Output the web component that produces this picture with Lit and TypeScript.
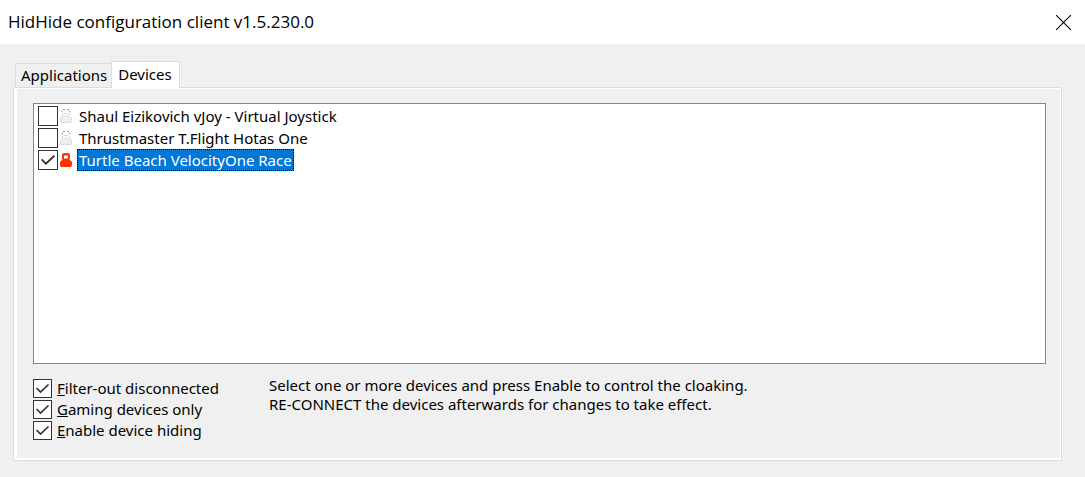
import { LitElement, html, css, svg } from "lit";
import { customElement, state } from "lit/decorators.js";

interface Device {
  name: string;
  hidden: boolean;
}

@customElement("lock-icon")
class LockIcon extends LitElement {
  static properties = { locked: { type: Boolean } };
  declare locked: boolean;

  static styles = css`
    :host { display: block; width: 12px; height: 14px; }
    svg { display: block; }
  `;

  render() {
    return html`<svg width="12" height="14" viewBox="0 0 12 14" aria-hidden="true">
      ${this.locked
        ? svg`<path fill="#ff3300" fill-rule="evenodd"
            d="M3.500 0h5L10 1.500V5L9.500 6.500 12 9v3.500L11 14H1l-1-1.500V9l2.500-2.500L2 5V1.500zM4 3v2.500h4V3L7.500 2.500h-3z" />`
        : svg`<path d="M3 6h6l3 3v3.500L11 14H1l-1-1.500V9z" fill="#eeeeee" />
            <path d="M3 .5h2M7 .5h2M1.500 2.500h1M9.500 2.500h1M2 5.500h1M9 5.500h1" stroke="#999999" fill="none" />
            <path d="M2.500 1v5M9.500 1v5" stroke="#d0d0d0" stroke-dasharray="1 1" fill="none" />
            <path d="M4 4.500h4" stroke="#d8d8d8" fill="none" />
            <path d="M3 6.500L.5 9v3.500l1 1h9l1-1V9L9 6.500" fill="none" stroke="#c8c8c8" stroke-dasharray="1 1" />`}
    </svg>`;
  }
}

@customElement("app-root")
class AppRoot extends LitElement {
  @state() private devices: Device[] = [
    { name: "Shaul Eizikovich vJoy - Virtual Joystick", hidden: false },
    { name: "Thrustmaster T.Flight Hotas One", hidden: false },
    { name: "Turtle Beach VelocityOne Race", hidden: true },
  ];
  @state() private selected = 2;

  private options = [
    { key: "F", rest: "ilter-out disconnected" },
    { key: "G", rest: "aming devices only" },
    { key: "E", rest: "nable device hiding" },
  ];

  static styles = css`
    * { box-sizing: border-box; }
    :host {
      display: flex;
      flex-direction: column;
      min-height: 100vh;
      background: #f0f0f0;
      color: #000;
      font: 15px/19px "Noto Sans", sans-serif;
    }
    .titlebar {
      display: flex;
      align-items: center;
      justify-content: space-between;
      height: 44px;
      padding: 0 14px 0 8px;
      background: #fff;
    }
    .title { margin: 0; font: 17px/24px "Open Sans", sans-serif; }
    .close { display: flex; padding: 0; border: 0; background: none; }
    .content { flex: 1; display: flex; flex-direction: column; padding: 17px 23px 16px 13px; }
    .tabs { display: flex; align-items: flex-end; padding-left: 2px; }
    .tab {
      height: 24px;
      padding: 0 4px 0 5px;
      border: 1px solid #dcdcdc;
      border-width: 1px 0 0 1px;
      background: #f0f0f0;
      color: inherit;
      font: inherit;
    }
    .tab.active {
      position: relative;
      height: 27px;
      margin-bottom: -1px;
      padding: 0 7px 2px 6px;
      border-right-width: 1px;
      background: #fff;
    }
    .panel {
      flex: 1;
      display: flex;
      flex-direction: column;
      gap: 12px;
      padding: 15px 15px 20px 19px;
      border: 1px solid #dcdcdc;
      box-shadow: inset 3px 1px #fff, inset -1px -2px #fff;
    }
    .list {
      flex: 1;
      margin: 0;
      padding: 1px 4px;
      border: 1px solid #828790;
      background: #fff;
      list-style: none;
    }
    .device { display: flex; align-items: center; height: 22px; }
    .device lock-icon { margin: 0 5px 0 2px; }
    .name { height: 22px; padding: 0 2px; border: 0; background: none; color: inherit; font: inherit; }
    .name.selected { background: #0078d7; color: #fff; outline: 1px dotted #000; outline-offset: -1px; }
    .check {
      appearance: none;
      flex: none;
      width: 19px;
      height: 19px;
      margin: 0;
      border: 1px solid #333;
      background: #fff;
    }
    .check:checked {
      background: #fff url("data:image/svg+xml,%3Csvg xmlns='http://www.w3.org/2000/svg' viewBox='0 0 17 17'%3E%3Cpath d='M2.500 8l4 4 8-7.500' fill='none' stroke='%23333' stroke-width='1.700'/%3E%3C/svg%3E");
    }
    .device .check { width: 20px; height: 20px; }
    .footer { display: flex; align-items: flex-start; }
    .options { display: grid; gap: 2px; width: 236px; padding-top: 3px; }
    .option { display: flex; align-items: center; gap: 5px; }
    .key { text-decoration: underline; }
    .help { margin: 0; }
  `;

  private toggle(i: number) {
    this.devices = this.devices.map((d, n) => (n === i ? { ...d, hidden: !d.hidden } : d));
  }

  render() {
    return html`
      <header class="titlebar">
        <h1 class="title">HidHide configuration client v1.5.230.0</h1>
        <button class="close" aria-label="Close">
          <svg width="15" height="15" viewBox="0 0 15 15"><path d="M0 0l15 15M15 0L0 15" stroke="#000" stroke-width="1.100" /></svg>
        </button>
      </header>
      <main class="content">
        <div class="tabs" role="tablist">
          <button class="tab" role="tab" aria-selected="false">Applications</button>
          <button class="tab active" role="tab" aria-selected="true">Devices</button>
        </div>
        <section class="panel" role="tabpanel" aria-label="Devices">
          <ul class="list">
            ${this.devices.map(
              (d, i) => html`<li class="device">
                <input class="check" type="checkbox" aria-label=${d.name} .checked=${d.hidden} @change=${() => this.toggle(i)} />
                <lock-icon ?locked=${d.hidden}></lock-icon>
                <button class="name ${i === this.selected ? "selected" : ""}" @click=${() => (this.selected = i)}>${d.name}</button>
              </li>`
            )}
          </ul>
          <div class="footer">
            <div class="options">
              ${this.options.map(
                (o) => html`<label class="option"><input class="check" type="checkbox" checked /><span><span class="key">${o.key}</span>${o.rest}</span></label>`
              )}
            </div>
            <p class="help">
              Select one or more devices and press Enable to control the cloaking.<br />
              RE-CONNECT the devices afterwards for changes to take effect.
            </p>
          </div>
        </section>
      </main>
    `;
  }
}
